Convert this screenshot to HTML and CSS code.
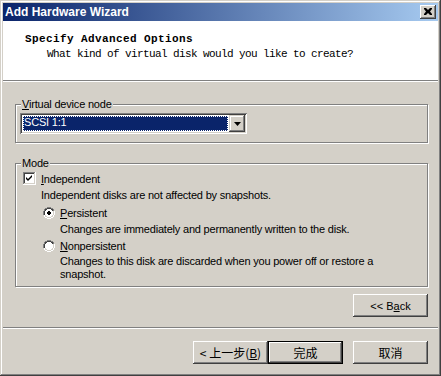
FILE: index.html
```html
<!DOCTYPE html>
<html>
<head>
<meta charset="utf-8">
<link rel="stylesheet" href="styles.css">
</head>
<body>
<div class="window">
  <div class="titlebar">
    <span class="title">Add Hardware Wizard</span>
    <span class="close"><svg width="8" height="7" viewBox="0 0 8 7"><path d="M0 0h2l2 2 2-2h2v1l-2 2.5 2 2.5v1h-2l-2-2-2 2h-2v-1l2-2.5-2-2.5z" fill="#000"/></svg></span>
  </div>
  <div class="header">
    <div class="h-title">Specify Advanced Options</div>
    <div class="h-sub">What kind of virtual disk would you like to create?</div>
  </div>
  <div class="etch"></div>
  <div class="body">
    <div class="group g-node">
      <div class="caption"><u>V</u>irtual device node</div>
      <div class="combo">
        <div class="combo-field"><span class="combo-sel">SCSI 1:1</span></div>
        <div class="combo-btn"><svg width="7" height="4" viewBox="0 0 7 4"><path d="M0 0h7l-3.5 4z" fill="#000"/></svg></div>
      </div>
    </div>
    <div class="group g-mode">
      <div class="caption">Mode</div>
      <div class="row">
        <span class="check"><svg width="13" height="13" viewBox="0 0 13 13"><path d="M0 0h12v1h-11v11h-1z" fill="#808080"/><path d="M1 1h10v1h-9v9h-1z" fill="#404040"/><path d="M12 0h1v13h-13v-1h12z" fill="#fff"/><path d="M11 1h1v11h-11v-1h10z" fill="#d4d0c8"/><rect x="2" y="2" width="9" height="9" fill="#fff"/><path d="M3 5l2 2 4-4v2l-4 4-2-2z" fill="#000"/></svg></span>
        <span class="lbl"><u>I</u>ndependent</span>
      </div>
      <div class="desc d1">Independent disks are not affected by snapshots.</div>
      <div class="row radio-row">
        <span class="radio"><svg width="12" height="12" viewBox="0 0 12 12"><path d="M4 0h4v1h2v1h1v2h-1v-2h-2v-1h-4v1h-2v2h-1v4h-1v-4h1v-2h1v-1h2z" fill="#808080"/><path d="M4 1h4v1h2v2h-1v-1h-1v-1h-4v1h-1v1h-1v4h-1v-4h1v-2h2z" fill="#404040"/><path d="M11 4h1v4h-1v2h-1v1h-2v1h-4v-1h-2v-1h-1v-2h1v2h2v1h4v-1h2v-2h1z" fill="#fff"/><path d="M10 4h1v4h-1v2h-2v1h-4v-1h-2v-2h1v1h1v1h4v-1h1v-1h1z" fill="#d4d0c8"/><path d="M4 2h4v1h1v1h1v4h-1v1h-1v1h-4v-1h-1v-1h-1v-4h1v-1h1z" fill="#fff"/><path d="M5 4h2v1h1v2h-1v1h-2v-1h-1v-2h1z" fill="#000"/></svg></span>
        <span class="lbl"><u>P</u>ersistent</span>
      </div>
      <div class="desc d2">Changes are immediately and permanently written to the disk.</div>
      <div class="row radio-row">
        <span class="radio"><svg width="12" height="12" viewBox="0 0 12 12"><path d="M4 0h4v1h2v1h1v2h-1v-2h-2v-1h-4v1h-2v2h-1v4h-1v-4h1v-2h1v-1h2z" fill="#808080"/><path d="M4 1h4v1h2v2h-1v-1h-1v-1h-4v1h-1v1h-1v4h-1v-4h1v-2h2z" fill="#404040"/><path d="M11 4h1v4h-1v2h-1v1h-2v1h-4v-1h-2v-1h-1v-2h1v2h2v1h4v-1h2v-2h1z" fill="#fff"/><path d="M10 4h1v4h-1v2h-2v1h-4v-1h-2v-2h1v1h1v1h4v-1h1v-1h1z" fill="#d4d0c8"/><path d="M4 2h4v1h1v1h1v4h-1v1h-1v1h-4v-1h-1v-1h-1v-4h1v-1h1z" fill="#fff"/></svg></span>
        <span class="lbl"><u>N</u>onpersistent</span>
      </div>
      <div class="desc d3">Changes to this disk are discarded when you power off or restore a<br>snapshot.</div>
    </div>
    <div class="back-row"><button class="btn">&lt;&lt; B<u>a</u>ck</button></div>
  </div>
  <div class="etch"></div>
  <div class="footer">
    <button class="btn cjk">&lt; 上一步(<u>B</u>)</button>
    <button class="btn cjk default">完成</button>
    <button class="btn cjk cancel">取消</button>
  </div>
</div>
</body>
</html>
```

FILE: styles.css
```css
html, body {
  margin: 0;
  padding: 0;
  background: #d4d0c8;
}
.window {
  width: 441px;
  height: 376px;
  box-sizing: border-box;
  padding: 3px;
  background: #d4d0c8;
  box-shadow: inset -1px -1px #404040, inset 1px 1px #d4d0c8, inset -2px -2px #808080, inset 2px 2px #fff;
  display: flex;
  flex-direction: column;
  font-family: "Liberation Sans", Arial, sans-serif;
  font-size: 11px;
  letter-spacing: -0.2px;
  color: #000;
}
.titlebar {
  height: 18px;
  background: linear-gradient(to right, #0a246a, #a6caf0);
  display: flex;
  align-items: center;
  justify-content: space-between;
  padding: 0 2px 0 2px;
}
.title {
  color: #fff;
  font-weight: bold;
  font-size: 12px;
  letter-spacing: 0;
  line-height: 18px;
}
.close {
  width: 16px;
  height: 14px;
  box-sizing: border-box;
  background: #d4d0c8;
  box-shadow: inset -1px -1px #404040, inset 1px 1px #fff, inset -2px -2px #808080;
  display: flex;
  align-items: center;
  justify-content: center;
  padding-bottom: 1px;
}
.header {
  background: #fff;
  height: 59px;
  box-sizing: border-box;
  padding-top: 11px;
  font-family: "Liberation Mono", monospace;
}
.h-title {
  font-weight: bold;
  font-size: 11px;
  letter-spacing: 0.4px;
  line-height: 15px;
  padding-left: 22px;
}
.h-sub {
  font-size: 11px;
  letter-spacing: -0.6px;
  line-height: 15px;
  padding-left: 44px;
}
.etch {
  height: 1px;
  background: #808080;
  border-bottom: 1px solid #fff;
}
.body {
  flex: 1;
  padding: 0 10px 0 12px;
  display: flex;
  flex-direction: column;
}
.group {
  border: 1px solid #808080;
  box-shadow: inset 1px 1px #fff, 1px 1px #fff;
}
.caption {
  width: fit-content;
  margin-top: -7px;
  padding: 0 1px;
  line-height: 13px;
  background: #d4d0c8;
}
.g-node {
  margin-top: 22px;
  padding: 0 0 8px 5px;
}
.g-node .caption {
  margin-bottom: 2px;
}
.combo {
  width: 227px;
  height: 21px;
  margin-left: -1px;
  box-sizing: border-box;
  background: #fff;
  box-shadow: inset 1px 1px #808080, inset -1px -1px #fff, inset 2px 2px #404040, inset -2px -2px #d4d0c8;
  padding: 2px;
  display: flex;
}
.combo-field {
  flex: 1;
  padding: 1px;
}
.combo-sel {
  display: block;
  height: 100%;
  box-sizing: border-box;
  background: #0a246a;
  color: #fff;
  outline: 1px dotted #fff;
  outline-offset: -1px;
  padding-left: 1px;
  line-height: 13px;
}
.combo-btn {
  width: 16px;
  height: 17px;
  box-sizing: border-box;
  background: #d4d0c8;
  box-shadow: inset -1px -1px #404040, inset 1px 1px #d4d0c8, inset -2px -2px #808080, inset 2px 2px #fff;
  display: flex;
  align-items: center;
  justify-content: center;
}
.g-mode {
  margin-top: 20px;
  padding: 0 0 5px 5px;
}
.row {
  height: 17px;
  display: flex;
  align-items: center;
  padding-left: 2px;
}
.check {
  width: 13px;
  height: 13px;
  display: block;
  margin-right: 5px;
}
.check svg, .radio svg { display: block; }
.radio-row {
  padding-left: 22px;
}
.radio {
  width: 12px;
  height: 12px;
  display: block;
  margin-right: 5px;
}
.desc {
  line-height: 17px;
}
.d1 { padding-left: 20px; }
.d2 { padding-left: 39px; line-height: 16px; }
.d3 { padding-left: 39px; line-height: 13px; margin-top: 1px; }
.back-row {
  display: flex;
  justify-content: flex-end;
  margin-top: 7px;
}
.btn {
  width: 75px;
  height: 23px;
  box-sizing: border-box;
  border: 0;
  margin: 0;
  padding: 0;
  background: #d4d0c8;
  box-shadow: inset -1px -1px #404040, inset 1px 1px #fff, inset -2px -2px #808080, inset 2px 2px #d4d0c8;
  font-family: "Liberation Sans", Arial, sans-serif;
  font-size: 11px;
  letter-spacing: 0;
  color: #000;
}
.footer {
  display: flex;
  justify-content: flex-end;
  padding: 12px 10px 0 0;
  height: 44px;
  box-sizing: border-box;
}
.cjk {
  font-family: "Noto Sans CJK SC", "Liberation Sans", sans-serif;
  font-size: 12px;
}
.default {
  border: 1px solid #000;
}
.cancel {
  margin-left: 10px;
}
```
